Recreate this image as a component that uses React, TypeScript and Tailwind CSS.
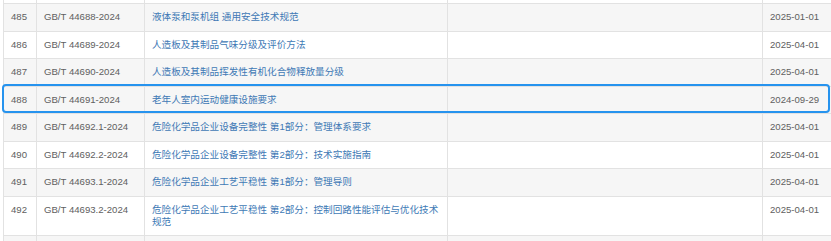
import React from 'react';

type Row = {
  no: number;
  code: string;
  title: string;
  date: string;
  tall?: boolean;
};

const ROWS: Row[] = [
  { no: 485, code: 'GB/T 44688-2024', title: '液体泵和泵机组 通用安全技术规范', date: '2025-01-01' },
  { no: 486, code: 'GB/T 44689-2024', title: '人造板及其制品气味分级及评价方法', date: '2025-04-01' },
  { no: 487, code: 'GB/T 44690-2024', title: '人造板及其制品挥发性有机化合物释放量分级', date: '2025-04-01' },
  { no: 488, code: 'GB/T 44691-2024', title: '老年人室内运动健康设施要求', date: '2024-09-29' },
  { no: 489, code: 'GB/T 44692.1-2024', title: '危险化学品企业设备完整性 第1部分：管理体系要求', date: '2025-04-01' },
  { no: 490, code: 'GB/T 44692.2-2024', title: '危险化学品企业设备完整性 第2部分：技术实施指南', date: '2025-04-01' },
  { no: 491, code: 'GB/T 44693.1-2024', title: '危险化学品企业工艺平稳性 第1部分：管理导则', date: '2025-04-01' },
  {
    no: 492,
    code: 'GB/T 44693.2-2024',
    title: '危险化学品企业工艺平稳性 第2部分：控制回路性能评估与优化技术规范',
    date: '2025-04-01',
    tall: true,
  },
];

const GRID = 'grid grid-cols-[33px_108px_303px_315px_1fr]';
const CELL = 'border-r border-[#e2e2e2] pt-[7px] pl-[7px] pr-[7px]';

function EmptyRow({ striped, height }: { striped: boolean; height: string }) {
  return (
    <div className={`${GRID} ${height} border-b border-[#e2e2e2] ${striped ? 'bg-[#f6f6f6]' : 'bg-white'}`}>
      <div className="border-r border-[#e2e2e2]" />
      <div className="border-r border-[#e2e2e2]" />
      <div className="border-r border-[#e2e2e2]" />
      <div className="border-r border-[#e2e2e2]" />
      <div />
    </div>
  );
}

function StandardRow({ row, index }: { row: Row; index: number }) {
  const active = row.no === 488;
  const striped = index % 2 === 0 || active;
  return (
    <div
      className={`relative ${GRID} ${row.tall ? 'h-[39.5px]' : 'h-[27.5px]'} border-b border-[#e2e2e2] ${
        striped ? 'bg-[#f6f6f6]' : 'bg-white'
      }`}
    >
      <div className={`${CELL} text-[#606060]`}>{row.no}</div>
      <div className={`${CELL} text-[#606060]`}>{row.code}</div>
      <div className={`${CELL} pr-[8px] text-[#4079b5]`}>{row.title}</div>
      <div className={CELL} />
      <div className="pt-[7px] pl-[7px] text-[#606060]">{row.date}</div>
      {active ? (
        <span className="pointer-events-none absolute -top-[3px] bottom-[0.5px] -left-[2px] right-[1px] rounded-[4px] border-2 border-[#2693ee]" />
      ) : null}
    </div>
  );
}

export default function App() {
  return (
    <div
      className="h-[241px] w-[831px] overflow-hidden bg-white pl-[3px] text-[9.6px] leading-[12px] antialiased"
      style={{ fontFamily: '"Liberation Sans", Arial, "Noto Sans CJK SC", sans-serif' }}
    >
      <div className="border-l border-[#e2e2e2]">
        <EmptyRow striped={false} height="h-[4px]" />
        {ROWS.map((row, i) => (
          <StandardRow key={row.no} row={row} index={i} />
        ))}
        <EmptyRow striped height="h-[20px]" />
      </div>
    </div>
  );
}
